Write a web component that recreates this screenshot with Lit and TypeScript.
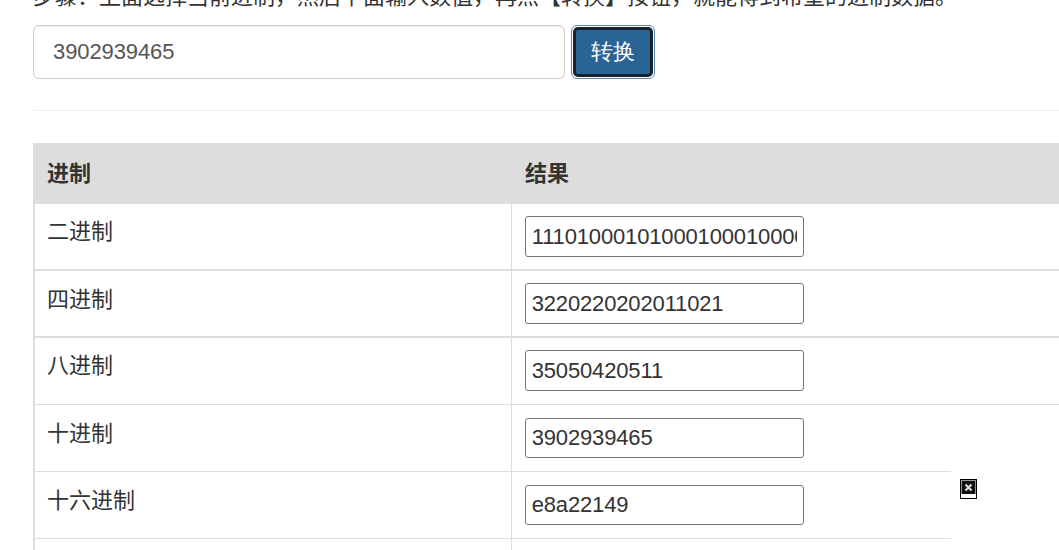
import { LitElement, html, css } from "lit";
import { customElement } from "lit/decorators.js";

const rows: [string, string, string][] = [
  ["二进制", "11101000101000100010000101001001", "thick r1"],
  ["四进制", "3220220202011021", "thick r2"],
  ["八进制", "35050420511", "r1"],
  ["十进制", "3902939465", "r3"],
  ["十六进制", "e8a22149", "r3"],
  ["", "", "bare"],
];

@customElement("app-root")
export class AppRoot extends LitElement {
  static styles = css`
    :host {
      display: block;
      width: 1059px;
      height: 550px;
      overflow: hidden;
      position: relative;
      background: #fff;
      font-family: "Liberation Sans", "Noto Sans CJK SC", sans-serif;
      color: #333;
      font-size: 22px;
    }
    .page { padding-left: 33px; width: 1300px; box-sizing: border-box; }
    .intro { margin: -19px 0 0; height: 31px; line-height: 31px; font-size: 22px; white-space: nowrap; }
    .form { display: flex; gap: 6px; margin-top: 13px; }
    .field {
      width: 532px; height: 54px; box-sizing: border-box;
      border: 1px solid #ccc; border-radius: 6px; padding: 0 19px;
      font: 22px "Liberation Sans", sans-serif; letter-spacing: -0.1px; color: #555; background: #fff;
      box-shadow: inset 0 1px 1px rgba(0,0,0,.075); outline: none;
    }
    .btn {
      width: 84px; height: 54px; box-sizing: border-box;
      border-radius: 6px; border: 1px solid #5f88aa; background: #fff;
      display: flex; padding: 1px;
    }
    .btn span {
      flex: 1; display: flex; align-items: center; justify-content: center;
      background: #2a6496; color: #fff; border: 3px solid #16222e; border-radius: 5px;
      font-size: 22px;
    }
    hr { border: 0; border-top: 1px solid #eee; margin: 31px 0 32px; }
    .table { width: 1240px; border-left: 2px solid #ddd; box-sizing: border-box; }
    .row { display: grid; grid-template-columns: 476px 1fr; box-sizing: border-box; height: 67px; border-bottom: 1px solid #ddd; }
    .row.thick { border-bottom-width: 2px; }
    .row.bare { border-bottom: 0; }
    .row.head { height: 61px; background: #ddd; border: 0; margin-left: -2px; grid-template-columns: 478px 1fr; font-weight: bold; align-items: center; }
    .cell { padding: 12px 14px 0 12px; line-height: 30px; }
    .cell + .cell { border-left: 1px solid #ddd; padding-left: 13px; }
    .r1 .name { padding-top: 13px; }
    .r2 .name { padding-top: 14px; }
    .r3 .name { padding-top: 14px; }
    .r3 .value { padding-top: 13px; }
    .r3 .out { height: 40px; }
    .head .cell { padding: 0 14px; border: 0; }
    .out {
      display: block; width: 279px; height: 41px; box-sizing: border-box;
      border: 1px solid #767676; border-radius: 3px; padding: 1px 5.700px;
      font: 22px "Liberation Sans", sans-serif; letter-spacing: -0.15px; color: #333; background: #fff; outline: none;
    }
    .ad {
      position: absolute; left: 951px; top: 441px; width: 108px; height: 109px; background: #fff;
    }
    .close { position: absolute; left: 9px; top: 38px; width: 17px; height: 20px; display: block; }
  `;

  render() {
    return html`
      <div class="page">
        <p class="intro">步骤：上面选择当前进制，然后下面输入数值，再点【转换】按钮，就能得到希望的进制数据。</p>
        <div class="form">
          <input class="field" .value=${"3902939465"} />
          <button class="btn"><span>转换</span></button>
        </div>
        <hr />
        <div class="table">
          <div class="row head"><div class="cell">进制</div><div class="cell">结果</div></div>
          ${rows.map(
            ([k, v, c]) => html`<div class="row ${c}">
              <div class="cell name">${k}</div>
              <div class="cell value">${v ? html`<input class="out" .value=${v} />` : ""}</div>
            </div>`
          )}
        </div>
      </div>
      <div class="ad">
        <svg class="close" viewBox="0 0 17 20">
          <rect width="17" height="20" fill="#000" />
          <rect x="1" y="1" width="15" height="18" fill="#fff" />
          <rect x="1" y="1" width="15" height="14" fill="#999" />
          <rect x="2" y="2" width="13" height="13" fill="#111" />
          <path d="M5.500 5.500l6 6M11.500 5.500l-6 6" stroke="#ddd" stroke-width="2.200" />
        </svg>
      </div>
    `;
  }
}
